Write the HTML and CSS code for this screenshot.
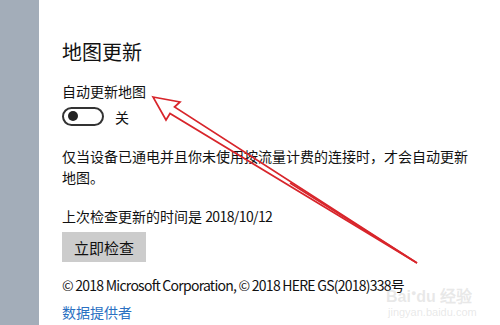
FILE: index.html
```html
<!DOCTYPE html>
<html lang="zh-CN">
<head>
<meta charset="utf-8">
<link rel="stylesheet" href="styles.css">
</head>
<body>
<div class="page">
  <div class="strip"></div>
  <main class="main">
    <h2 class="title">地图更新</h2>
    <div class="label">自动更新地图</div>
    <div class="toggle-row">
      <span class="toggle"><span class="knob"></span></span>
      <span class="state">关</span>
    </div>
    <p class="para">仅当设备已通电并且你未使用按流量计费的连接时，才会自动更新地图。</p>
    <div class="last">上次检查更新的时间是 <span class="latin">2018/10/12</span></div>
    <button class="btn">立即检查</button>
    <div class="copy">© 2018 Microsoft Corporation, © 2018 HERE GS(2018)338号</div>
    <a class="link">数据提供者</a>
  </main>
  <div class="watermark">
    <div class="wm-top">Bai<span class="paw">●</span>du 经验</div>
    <div class="wm-bottom">jingyan.baidu.com</div>
  </div>
  <svg class="arrow" width="500" height="325" viewBox="0 0 500 325">
    <path d="M153 97 L180 102 L174.5 107 L417 263 L170 113.5 L166 120 Z" fill="none" stroke="#d8252b" stroke-width="1.7" stroke-linejoin="miter"/>
    <path d="M290 183 L417 263" stroke="#d8252b" stroke-width="1.6"/>
  </svg>
</div>
</body>
</html>
```
FILE: styles.css
```css
html, body {
  margin: 0;
  padding: 0;
  background: #ffffff;
}
.page {
  position: relative;
  display: flex;
  width: 500px;
  height: 325px;
  overflow: hidden;
  font-family: "Noto Sans CJK SC", sans-serif;
  color: #111;
}
.strip {
  width: 39px;
  flex: none;
  background: #a3adb9;
}
.main {
  flex: 1;
  padding: 38px 0 0 23px;
  display: flex;
  flex-direction: column;
  align-items: flex-start;
}
.title {
  margin: 0;
  font-size: 20px;
  font-weight: normal;
  line-height: 28px;
  color: #111;
}
.label {
  margin-top: 15px;
  font-size: 14px;
  line-height: 20px;
}
.toggle-row {
  margin-top: 5px;
  display: flex;
  align-items: center;
  height: 20px;
}
.toggle {
  box-sizing: border-box;
  width: 42px;
  height: 19px;
  border: 2px solid #333;
  border-radius: 10px;
  display: flex;
  align-items: center;
  padding-left: 4px;
}
.knob {
  width: 10px;
  height: 10px;
  border-radius: 50%;
  background: #222;
}
.state {
  margin-left: 11px;
  font-size: 14px;
  line-height: 20px;
  position: relative;
  top: 1px;
}
.para {
  margin: 20px 0 0 0;
  width: 410px;
  font-size: 14px;
  line-height: 21px;
}
.last {
  margin-top: 18px;
  font-size: 14px;
  line-height: 20px;
}
.latin {
  letter-spacing: -0.6px;
}
.btn {
  margin-top: 6px;
  width: 84px;
  height: 30px;
  border: none;
  background: #cccccc;
  font-size: 15px;
  font-family: "Noto Sans CJK SC", sans-serif;
  color: #111;
  padding: 0;
}
.copy {
  margin-top: 13px;
  font-size: 14px;
  line-height: 20px;
  white-space: nowrap;
  letter-spacing: -0.75px;
}
.link {
  margin-top: 7px;
  font-size: 14px;
  line-height: 20px;
  color: #2a70c2;
}
.watermark {
  position: absolute;
  left: 386px;
  top: 284px;
  color: rgba(190, 190, 190, 0.35);
  font-family: "Liberation Sans", sans-serif;
}
.wm-top {
  font-size: 16px;
  line-height: 18px;
  font-weight: bold;
}
.paw {
  font-size: 9px;
  vertical-align: super;
}
.wm-bottom {
  font-size: 11px;
  line-height: 13px;
  padding-left: 2px;
}
.arrow {
  position: absolute;
  left: 0;
  top: 0;
  pointer-events: none;
}
```
